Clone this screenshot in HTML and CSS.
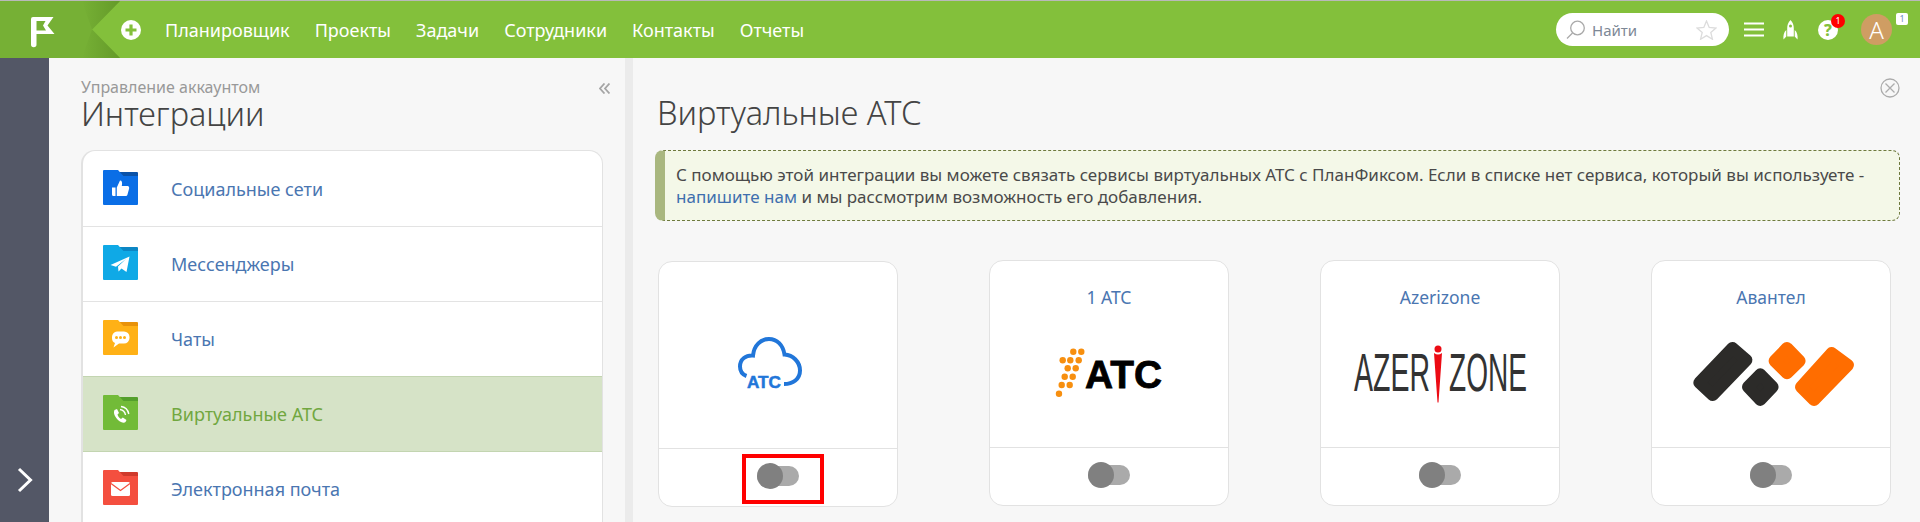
FILE: index.html
```html
<!DOCTYPE html>
<html lang="ru">
<head>
<meta charset="utf-8">
<title>Виртуальные АТС</title>
<link rel="stylesheet" href="styles.css">
</head>
<body>
<header class="topbar">
  <svg class="brand" width="120" height="57" viewBox="0 0 120 57">
    <defs>
      <linearGradient id="shadeTop" x1="0" y1="0" x2="1" y2="0"><stop offset="0" stop-color="#76b035"/><stop offset="1" stop-color="#649a29"/></linearGradient>
    </defs>
    <polygon points="0,0 120,0 92,28.5 120,57 0,57" fill="#76b035"/>
    <polygon points="82,0 120,0 92,28.5" fill="url(#shadeTop)"/>
    <polygon points="82,57 120,57 92,28.5" fill="url(#shadeTop)"/>
    <path fill="#fff" fill-rule="evenodd" d="M33 16H53.500L47.500 24.500L54.500 33H36.500V43.500A1.700 1.700 0 0 1 31 43.500V18A2 2 0 0 1 33 16ZM36.500 20V29.500H46L43 24.500L45.500 20Z"/>
  </svg>
  <svg class="plus" width="20" height="20" viewBox="0 0 20 20"><circle cx="10" cy="10" r="10" fill="#fff"/><path d="M10 4.500V15.500M4.500 10H15.500" stroke="#83c03b" stroke-width="3.200"/></svg>
  <nav class="nav">
    <a>Планировщик</a><a>Проекты</a><a>Задачи</a><a>Сотрудники</a><a>Контакты</a><a>Отчеты</a>
  </nav>
  <div class="tools">
    <div class="search">
      <svg width="20" height="20" viewBox="0 0 20 20" fill="none" stroke="#a9a9a9" stroke-width="1.300"><circle cx="11.500" cy="8" r="6.800"/><path d="M6.500 13L1 18.500"/></svg>
      <span class="search-text">Найти</span>
      <svg class="star" width="21" height="20" viewBox="0 0 21 20" fill="none" stroke="#dcdcdc" stroke-width="1.300"><path d="M10.500 1L13.200 7.400L20 8L14.800 12.500L16.400 19.200L10.500 15.600L4.600 19.200L6.200 12.500L1 8L7.800 7.400Z"/></svg>
    </div>
    <svg class="burger" width="20" height="15" viewBox="0 0 20 15"><path d="M0 1.500H20M0 7.500H20M0 13.500H20" stroke="#fff" stroke-width="2"/></svg>
    <svg class="rocket" width="15" height="20" viewBox="0 0 15 20"><path fill="#fff" fill-rule="evenodd" d="M7.500 0C10 2.500 10.800 5.500 10.800 8.500V16.500H4.200V8.500C4.200 5.500 5 2.500 7.500 0ZM7.500 4.500A1.500 1.500 0 1 0 7.500 7.500A1.500 1.500 0 1 0 7.500 4.500ZM3.300 10V16.500L0.500 19.500C0 16 0.800 12 3.300 10ZM11.700 10C14.200 12 15 16 14.500 19.500L11.700 16.500Z"/></svg>
    <div class="help">
      <span class="help-mark">?</span>
      <span class="help-badge">1</span>
    </div>
    <div class="user">
      <span class="avatar">А</span>
      <span class="user-badge">1</span>
    </div>
  </div>
</header>

<main class="workspace">
  <aside class="rail">
    <svg width="16" height="26" viewBox="0 0 16 26" fill="none" stroke="#fff" stroke-width="3"><path d="M2 2L13.500 13L2 24"/></svg>
  </aside>

  <section class="sidebar">
    <div class="sidebar-head">
      <div>
        <div class="crumb">Управление аккаунтом</div>
        <h2 class="sidebar-title">Интеграции</h2>
      </div>
      <svg class="collapse" width="11" height="11" viewBox="0 0 11 11" fill="none" stroke="#a5a5a5" stroke-width="1.800"><path d="M5.500 0.500L1 5.500L5.500 10.500M10.500 0.500L6 5.500L10.500 10.500"/></svg>
    </div>
    <ul class="menu">
      <li class="menu-row">
        <svg class="folder folder-blue" width="35" height="35" viewBox="0 0 35 35"><path class="folder-tab" d="M15 2H34A1 1 0 0 1 35 3V9H15Z"/><path class="folder-body" d="M1 0H15L20.500 6H35V34A1 1 0 0 1 34 35H1A1 1 0 0 1 0 34V1A1 1 0 0 1 1 0Z"/><path fill="#fff" d="M9 17.500H12.500V26H10.500A1.500 1.500 0 0 1 9 24.500ZM13.800 17.500L17 10.500C19 10.500 19.500 12.500 18.800 16H24.500C26 16 26.500 17.500 26 19L24.500 24.500C24.200 25.500 23.500 26 22.500 26H13.800Z"/></svg>
        <span class="menu-label">Социальные сети</span>
      </li>
      <li class="menu-row">
        <svg class="folder folder-cyan" width="35" height="35" viewBox="0 0 35 35"><path class="folder-tab" d="M15 2H34A1 1 0 0 1 35 3V9H15Z"/><path class="folder-body" d="M1 0H15L20.500 6H35V34A1 1 0 0 1 34 35H1A1 1 0 0 1 0 34V1A1 1 0 0 1 1 0Z"/><path fill="#fff" d="M7.500 20L26.500 11.500L23.500 27L18.500 23.500L15.500 26.500L15 21.500L23 14L13 21.800Z"/></svg>
        <span class="menu-label">Мессенджеры</span>
      </li>
      <li class="menu-row">
        <svg class="folder folder-yellow" width="35" height="35" viewBox="0 0 35 35"><path class="folder-tab" d="M15 2H34A1 1 0 0 1 35 3V9H15Z"/><path class="folder-body" d="M1 0H15L20.500 6H35V34A1 1 0 0 1 34 35H1A1 1 0 0 1 0 34V1A1 1 0 0 1 1 0Z"/><path fill="#fff" d="M14 11.500H21A5.500 5.500 0 0 1 26.500 17V18A5.500 5.500 0 0 1 21 23.500H16L10.500 27.500L12 23C10 22.300 9 20.500 9 18V17A5.500 5.500 0 0 1 14 11.500Z"/><g fill="#ffb116"><circle cx="13.500" cy="17.500" r="1.500"/><circle cx="17.500" cy="17.500" r="1.500"/><circle cx="21.500" cy="17.500" r="1.500"/></g></svg>
        <span class="menu-label">Чаты</span>
      </li>
      <li class="menu-row menu-row-active">
        <svg class="folder folder-green" width="35" height="35" viewBox="0 0 35 35"><path class="folder-tab" d="M15 2H34A1 1 0 0 1 35 3V9H15Z"/><path class="folder-body" d="M1 0H15L20.500 6H35V34A1 1 0 0 1 34 35H1A1 1 0 0 1 0 34V1A1 1 0 0 1 1 0Z"/><path fill="#fff" d="M11.500 15L14 14L16 18L14.500 19.500C15 21.500 16.500 23 18 24L19.800 22.500L23.500 25L22.500 27C21 28.500 18 27.500 15 25C12 22 10 18 11.500 15Z"/><path fill="none" stroke="#fff" stroke-width="1.400" d="M17 14.500C20 15 22 17 22.500 20M18 11.500C22 12 25 15 25.800 19"/></svg>
        <span class="menu-label">Виртуальные АТС</span>
      </li>
      <li class="menu-row">
        <svg class="folder folder-red" width="35" height="35" viewBox="0 0 35 35"><path class="folder-tab" d="M15 2H34A1 1 0 0 1 35 3V9H15Z"/><path class="folder-body" d="M1 0H15L20.500 6H35V34A1 1 0 0 1 34 35H1A1 1 0 0 1 0 34V1A1 1 0 0 1 1 0Z"/><rect x="8" y="12" width="19" height="14" rx="1.500" fill="#fff"/><path d="M8 13.500L17.500 20.500L27 13.500" fill="none" stroke="#f44f3f" stroke-width="1.200"/></svg>
        <span class="menu-label">Электронная почта</span>
      </li>
    </ul>
  </section>

  <div class="splitter"></div>

  <section class="content">
    <svg class="close" width="20" height="20" viewBox="0 0 20 20" fill="none" stroke="#acacac" stroke-width="1.300"><circle cx="10" cy="10" r="9"/><path d="M5.500 5.500L14.500 14.500M14.500 5.500L5.500 14.500"/></svg>
    <h1 class="content-title">Виртуальные АТС</h1>
    <div class="notice">
      С помощью этой интеграции вы можете связать сервисы виртуальных АТС с ПланФиксом. Если в списке нет сервиса, который вы используете - <a class="notice-link">напишите нам</a> и мы рассмотрим возможность его добавления.
    </div>
    <div class="cards">
      <article class="card card-first">
        <div class="card-body">
          <div class="card-name"></div>
          <svg class="logo" width="238" height="110" viewBox="659 331 238 110">
            <path fill="none" stroke="#2176d9" stroke-width="4" d="M746.500 376C741 374 740 370 740 366.500C740 359 746 355 753 355.500C754 345 761 339 769 339C777 339 783 345 784.500 354.500C793 355 800 362 800 370.500C800 379 793 384 784 384"/>
            <text class="logo-atc-small" x="747" y="388" textLength="34" lengthAdjust="spacingAndGlyphs">ATC</text>
          </svg>
        </div>
        <div class="card-foot">
          <span class="toggle"><span class="knob"></span></span>
          <span class="marker"></span>
        </div>
      </article>

      <article class="card">
        <div class="card-body">
          <div class="card-name">1 АТС</div>
          <svg class="logo" width="238" height="110" viewBox="990 330 238 110">
            <g fill="#f78f0f">
              <circle cx="1073.300" cy="351.700" r="3.200"/><circle cx="1081.300" cy="351.700" r="3.200"/>
              <circle cx="1062.700" cy="360.300" r="3.200"/><circle cx="1070.300" cy="360.300" r="3.200"/><circle cx="1078.700" cy="360.300" r="3.200"/>
              <circle cx="1067.700" cy="368.300" r="3.200"/><circle cx="1075.700" cy="368.300" r="3.200"/>
              <circle cx="1064.700" cy="376.700" r="3.200"/><circle cx="1072.700" cy="376.700" r="3.200"/>
              <circle cx="1061.700" cy="385" r="3.200"/><circle cx="1069.700" cy="385" r="3.200"/>
              <circle cx="1059" cy="393.700" r="3.200"/>
            </g>
            <text class="logo-atc-big" x="1085" y="388" textLength="77" lengthAdjust="spacingAndGlyphs">ATC</text>
          </svg>
        </div>
        <div class="card-foot"><span class="toggle"><span class="knob"></span></span></div>
      </article>

      <article class="card">
        <div class="card-body">
          <div class="card-name">Azerizone</div>
          <svg class="logo" width="238" height="110" viewBox="1321 330 238 110">
            <text class="logo-azeri" x="1354" y="390.500" textLength="76" lengthAdjust="spacingAndGlyphs">AZER</text>
            <text class="logo-azeri" x="1449" y="390.500" textLength="78" lengthAdjust="spacingAndGlyphs">ZONE</text>
            <circle cx="1438" cy="349" r="3.500" fill="#ec0b14"/>
            <path fill="#ec0b14" d="M1434 353Q1438 356 1442 353L1438.500 402.500H1437.500Z"/>
          </svg>
        </div>
        <div class="card-foot"><span class="toggle"><span class="knob"></span></span></div>
      </article>

      <article class="card">
        <div class="card-body">
          <div class="card-name">Авантел</div>
          <svg class="logo" width="238" height="110" viewBox="1652 330 238 110">
            <g fill="#2c2b29" stroke="#2c2b29" stroke-width="12" stroke-linejoin="round">
              <polygon points="1732.500,348 1746.400,360 1712.700,395 1699.300,382.700"/>
              <polygon points="1760.300,374.300 1772.600,387 1760.300,400 1748,387"/>
            </g>
            <g fill="#ff6d00" stroke="#ff6d00" stroke-width="12" stroke-linejoin="round">
              <polygon points="1787,348 1799.600,361 1787,373.300 1774.600,361"/>
              <polygon points="1831.700,353 1848,365 1814,400 1801,387"/>
            </g>
          </svg>
        </div>
        <div class="card-foot"><span class="toggle"><span class="knob"></span></span></div>
      </article>
    </div>
  </section>
</main>
</body>
</html>
```
FILE: styles.css
```css
* {
  box-sizing: border-box;
}

html,
body {
  height: 100%;
  margin: 0;
  overflow: hidden;
}

body {
  display: flex;
  flex-direction: column;
  background: #f7f7f7;
  font-family: "Noto Sans", "Open Sans", sans-serif;
  color: #4a4a4a;
}

svg {
  display: block;
  flex: none;
}

/* top bar */
.topbar {
  flex: none;
  display: flex;
  align-items: center;
  height: 58px;
  border-top: 1px solid #b9b9b9;
  background: #83c03b;
  color: #fff;
}

.plus {
  margin-left: 1px;
}

.nav {
  display: flex;
  gap: 25px;
  margin-left: 24px;
  font-size: 18px;
}

.tools {
  display: flex;
  align-items: center;
  margin-left: auto;
}

.search {
  display: flex;
  align-items: center;
  width: 173px;
  height: 33px;
  padding: 0 12px 0 10px;
  border-radius: 17px;
  background: #fff;
}

.search-text {
  margin-left: 6px;
  font-size: 15px;
  color: #7d8896;
}

.star {
  margin-left: auto;
}

.burger {
  margin-left: 15px;
}

.rocket {
  margin-left: 19px;
}

.help {
  position: relative;
  width: 20px;
  height: 20px;
  margin-left: 20px;
  border-radius: 50%;
  background: #fff;
  text-align: center;
}

.help-mark {
  display: block;
  font-size: 16px;
  font-weight: 800;
  line-height: 20px;
  color: #83c03b;
}

.help-badge {
  position: absolute;
  top: -6px;
  left: 13px;
  width: 14px;
  height: 14px;
  border-radius: 50%;
  background: #f00;
  font-size: 9px;
  line-height: 14px;
  color: #fff;
}

.user {
  position: relative;
  width: 31px;
  height: 31px;
  margin-left: 23px;
  margin-right: 28px;
}

.avatar {
  display: block;
  height: 31px;
  border-radius: 50%;
  background: #cf9d63;
  font-size: 24px;
  font-weight: 300;
  line-height: 31px;
  text-align: center;
  color: #fff;
}

.user-badge {
  position: absolute;
  top: -1px;
  left: 35px;
  width: 12px;
  height: 12px;
  border-radius: 2px;
  background: #fff;
  font-size: 9px;
  line-height: 12px;
  text-align: center;
  color: #6d8dc0;
}

/* page columns */
.workspace {
  flex: 1;
  display: flex;
  min-height: 0;
}

.rail {
  flex: none;
  display: flex;
  flex-direction: column;
  justify-content: flex-end;
  width: 49px;
  padding: 0 0 29px 17px;
  background: #535766;
}

.sidebar {
  flex: none;
  width: 576px;
  padding: 0 22px 0 32px;
}

.sidebar-head {
  display: flex;
  justify-content: space-between;
  height: 92px;
  padding: 20px 0 0 0;
}

.crumb {
  font-size: 16px;
  line-height: 18px;
  color: #999;
}

.sidebar-title {
  margin: 0;
  font-size: 32.500px;
  font-weight: 300;
  line-height: 36px;
  color: #444;
}

.collapse {
  margin: 5px -7px 0 0;
}

.menu {
  margin: 0;
  padding: 1px 0 0;
  overflow: hidden;
  list-style: none;
  border: 1px solid #e2e2e2;
  border-left-width: 2px;
  border-bottom: 0;
  border-radius: 14px 14px 0 0;
  background: #fff;
}

.menu-row {
  display: flex;
  align-items: center;
  height: 75px;
  padding: 0 0 4px 20px;
  border-bottom: 1px solid #e3e3e3;
}

.menu-row-active {
  border-bottom-color: #c3d5b1;
  box-shadow: 0 -1px 0 #c3d5b1;
  background: #d6e3c7;
}

.menu-row-active .menu-label {
  color: #71a73f;
}

.menu-label {
  margin: 4px 0 0 33px;
  font-size: 18px;
  color: #4a76b1;
}

.folder-blue .folder-body { fill: #0a6ee6; }
.folder-blue .folder-tab { fill: #0a52a8; }
.folder-cyan .folder-body { fill: #0fa9e6; }
.folder-cyan .folder-tab { fill: #0c86c4; }
.folder-yellow .folder-body { fill: #ffb116; }
.folder-yellow .folder-tab { fill: #e8920a; }
.folder-green .folder-body { fill: #72bb38; }
.folder-green .folder-tab { fill: #549f2c; }
.folder-red .folder-body { fill: #f44f3f; }
.folder-red .folder-tab { fill: #cf3a2c; }

.splitter {
  flex: none;
  width: 8px;
  background: #ebebeb;
}

/* main panel */
.content {
  position: relative;
  flex: 1;
  min-width: 0;
  padding: 0 20px 0 22px;
}

.close {
  position: absolute;
  top: 20px;
  right: 20px;
}

.content-title {
  margin: 0;
  padding: 34px 0 0 2px;
  height: 92px;
  font-size: 32.500px;
  font-weight: 300;
  line-height: 42px;
  color: #444;
}

.notice {
  height: 71px;
  padding: 13px 20px 0 11px;
  border: 1px dashed #6e7a3e;
  border-left: 10px solid #a9b77f;
  border-radius: 8px;
  background: #f4f8e8;
  font-size: 17px;
  line-height: 22px;
  color: #4a4a4a;
}

.notice-link {
  color: #3f6fae;
}

.cards {
  display: flex;
  justify-content: space-between;
  align-items: flex-start;
  margin-top: 39px;
  padding: 0 9px 0 3px;
}

.card {
  width: 240px;
  height: 246px;
  overflow: hidden;
  border: 1px solid #e2e2e2;
  border-radius: 14px;
  background: #fff;
}

.card-first {
  margin-top: 1px;
}

.card-body {
  height: 186px;
  padding-top: 24px;
}

.card-name {
  height: 24px;
  font-size: 17.500px;
  line-height: 24px;
  text-align: center;
  color: #4a76b1;
}

.logo {
  margin-top: 21px;
}

.card-foot {
  position: relative;
  display: flex;
  justify-content: center;
  align-items: center;
  height: 58px;
  padding-bottom: 3px;
  border-top: 1px solid #e2e2e2;
}

.toggle {
  display: flex;
  align-items: center;
  width: 42px;
  height: 20px;
  border-radius: 10px;
  background: #aaa;
}

.knob {
  width: 26px;
  height: 26px;
  border-radius: 50%;
  background: #808080;
}

.marker {
  position: absolute;
  top: 5px;
  left: 83px;
  width: 82px;
  height: 50px;
  border: 4px solid #f00;
}

/* logos */
.logo-atc-small {
  font-family: "Liberation Sans", sans-serif;
  font-size: 17px;
  font-weight: 700;
  fill: #2176d9;
  stroke: #2176d9;
  stroke-width: 0.5px;
}

.logo-atc-big {
  font-family: "Liberation Sans", sans-serif;
  font-size: 39px;
  font-weight: 700;
  fill: #000;
  stroke: #000;
  stroke-width: 0.8px;
}

.logo-azeri {
  font-family: "Liberation Sans", sans-serif;
  font-size: 54px;
  fill: #333;
}
```
